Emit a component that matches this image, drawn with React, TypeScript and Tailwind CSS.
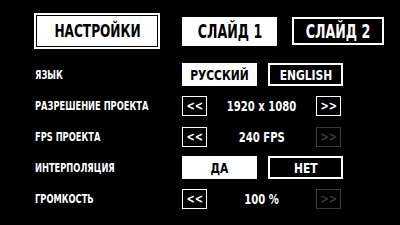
import React from "react";

const font = { fontFamily: '"DejaVu Sans Condensed", "Liberation Sans", sans-serif' };

const Arrow = ({ label, disabled }: { label: string; disabled?: boolean }) => (
  <div
    className={`w-[25px] h-[20px] flex items-center justify-center border-[1.5px] text-[13px] font-bold leading-none ${
      disabled ? "border-[#3a3a3a] text-[#3a3a3a]" : "border-white text-white"
    }`}
  >
    <span className="inline-block scale-x-[0.85] whitespace-nowrap">{label}</span>
  </div>
);

const Choice = ({ label, active }: { label: string; active?: boolean }) => (
  <div
    className={`w-[75px] h-[23px] flex items-center justify-center border-2 text-[14px] font-bold leading-none ${
      active ? "bg-white border-white text-black" : "bg-black border-white text-white"
    }`}
  >
    <span className="inline-block scale-x-[0.85] whitespace-nowrap">{label}</span>
  </div>
);

const Stepper = ({ value, nextDisabled }: { value: string; nextDisabled?: boolean }) => (
  <div className="flex items-center w-[160px]">
    <Arrow label="<<" />
    <div className="w-[109px] text-center text-white text-[14px] font-bold leading-none">
      <span className="inline-block scale-x-[0.8] whitespace-nowrap">{value}</span>
    </div>
    <Arrow label=">>" disabled={nextDisabled} />
  </div>
);

const Row = ({ label, children }: { label: string; children: React.ReactNode }) => (
  <div className="flex items-center h-[31px]">
    <div className="w-[147px] text-white text-[12px] font-bold leading-none">
      <span className="inline-block origin-left scale-x-[0.77] whitespace-nowrap">{label}</span>
    </div>
    {children}
  </div>
);

export default function App() {
  return (
    <div className="w-[400px] h-[225px] bg-black overflow-hidden" style={font}>
      {/* HEADER */}
      <div className="flex items-center pt-[13px] pl-[34px]">
        <div className="border-2 border-white p-[1px]">
          <div className="w-[120px] h-[30px] bg-white text-black flex items-center justify-center text-[18px] font-bold leading-none">
            <span className="inline-block scale-x-[0.75] whitespace-nowrap">НАСТРОЙКИ</span>
          </div>
        </div>
        <div className="ml-[22px] w-[95px] h-[29px] bg-white text-black flex items-center justify-center text-[20px] font-bold leading-none">
          <span className="inline-block scale-x-[0.7] whitespace-nowrap">СЛАЙД 1</span>
        </div>
        <div className="ml-[15px] w-[92px] h-[28px] border-2 border-white text-white flex items-center justify-center text-[20px] font-bold leading-none">
          <span className="inline-block scale-x-[0.7] whitespace-nowrap">СЛАЙД 2</span>
        </div>
      </div>

      {/* SETTINGS */}
      <div className="pl-[35px] pt-[10px] flex flex-col">
        <Row label="ЯЗЫК">
          <div className="flex gap-[11px]">
            <Choice label="РУССКИЙ" active />
            <Choice label="ENGLISH" />
          </div>
        </Row>
        <Row label="РАЗРЕШЕНИЕ ПРОЕКТА">
          <Stepper value="1920 x 1080" />
        </Row>
        <Row label="FPS ПРОЕКТА">
          <Stepper value="240 FPS" nextDisabled />
        </Row>
        <Row label="ИНТЕРПОЛЯЦИЯ">
          <div className="flex gap-[11px]">
            <Choice label="ДА" active />
            <Choice label="НЕТ" />
          </div>
        </Row>
        <Row label="ГРОМКОСТЬ">
          <Stepper value="100 %" nextDisabled />
        </Row>
      </div>
    </div>
  );
}
